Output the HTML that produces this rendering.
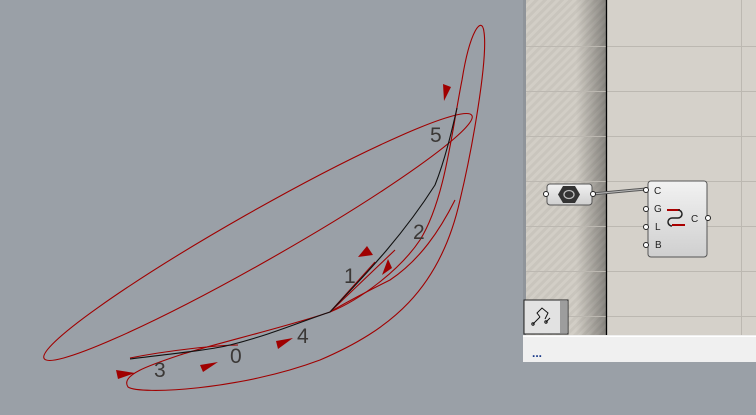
<!DOCTYPE html>
<html><head><meta charset="utf-8"><style>
html,body{margin:0;padding:0;width:756px;height:415px;overflow:hidden;background:#9aa0a7;font-family:"Liberation Sans",sans-serif}
.abs{position:absolute}
</style></head><body>
<svg class="abs" style="left:0;top:0" width="756" height="415" viewBox="0 0 756 415">
<defs>
<pattern id="hatch" width="6" height="6" patternUnits="userSpaceOnUse" patternTransform="rotate(45)">
<rect width="6" height="6" fill="#d2cec6"/><rect width="3" height="6" fill="#c9c5bd"/></pattern>
<linearGradient id="sh" x1="0" x2="1"><stop offset="0" stop-color="#000" stop-opacity="0"/><stop offset="1" stop-color="#000" stop-opacity="0.35"/></linearGradient>
<linearGradient id="comp" x1="0" y1="0" x2="0" y2="1"><stop offset="0" stop-color="#f2f2f2"/><stop offset="1" stop-color="#cfcfcf"/></linearGradient>
</defs>
<rect x="523" y="0" width="233" height="336" fill="#d5d1ca"/>
<rect x="523" y="0" width="3" height="336" fill="#8f949a"/>
<rect x="526" y="0" width="80" height="336" fill="url(#hatch)"/>
<rect x="576" y="0" width="30" height="336" fill="url(#sh)"/>
<g stroke="#bcb8b1" stroke-width="1">
<line x1="526" y1="46.5" x2="756" y2="46.5"/><line x1="526" y1="91.5" x2="756" y2="91.5"/>
<line x1="526" y1="136.5" x2="756" y2="136.5"/><line x1="526" y1="181.5" x2="756" y2="181.5"/>
<line x1="526" y1="226.5" x2="756" y2="226.5"/><line x1="526" y1="271.5" x2="756" y2="271.5"/>
<line x1="526" y1="316.5" x2="756" y2="316.5"/><line x1="741.5" y1="0" x2="741.5" y2="336"/>
</g>
<line x1="606.5" y1="0" x2="606.5" y2="336" stroke="#000" stroke-width="1.3"/>
<rect x="523" y="335" width="233" height="27" fill="#f0f0f0"/>
<line x1="523" y1="336.5" x2="756" y2="336.5" stroke="#fff"/>
<text x="532" y="357" font-size="12" fill="#1a3a8a" font-weight="bold">...</text>
<rect x="524" y="300" width="44" height="34" fill="#e2e2e2" stroke="#222"/>
<rect x="560" y="301" width="7" height="32" fill="#9d9d9d"/>
<g stroke="#111" fill="none" stroke-width="1"><path d="M533 324 L540 317 M540 317 L537 313 L542 308 L548 313 L545 319 M546 322 L550 318"/>
<circle cx="533" cy="324" r="1.2"/><circle cx="546" cy="322" r="1.2"/></g>
<path d="M592 194 L646 189" stroke="#555" stroke-width="3"/><path d="M592 194 L646 189" stroke="#bbb" stroke-width="1"/>
<rect x="547" y="184" width="45" height="21" rx="3" fill="url(#comp)" stroke="#555"/>
<polygon points="563,186 575,186 580,194.5 575,203 563,203 558,194.5" fill="#333"/>
<ellipse cx="569" cy="194.5" rx="5" ry="4" fill="none" stroke="#bbb" stroke-width="1.3"/>
<circle cx="546" cy="194" r="2.5" fill="#fff" stroke="#222"/><circle cx="593" cy="194" r="2.5" fill="#fff" stroke="#222"/>
<rect x="648" y="181" width="59" height="76" rx="3" fill="url(#comp)" stroke="#555"/>
<g fill="#fff" stroke="#222"><circle cx="646" cy="190" r="2.5"/><circle cx="646" cy="209" r="2.5"/><circle cx="646" cy="227" r="2.5"/><circle cx="646" cy="245" r="2.5"/><circle cx="708" cy="218" r="2.5"/></g>
<g font-size="10" fill="#222"><text x="654" y="194">C</text><text x="654" y="212">G</text><text x="655" y="230">L</text><text x="655" y="248">B</text><text x="691" y="222">C</text></g>
<path d="M667 210 L680 210" stroke="#a00" stroke-width="2"/><path d="M672 225 L685 225" stroke="#a00" stroke-width="2"/>
<path d="M678 210 a4 4 0 0 1 0 8 L672 218 a4 4 0 0 0 0 8" fill="none" stroke="#222" stroke-width="1.5"/>
<g fill="none" stroke="#a00000" stroke-width="1.1">
<ellipse cx="258" cy="237" rx="246" ry="25" transform="rotate(-29.6 258 237)"/>
<path d="M128,387 C140,395 240,390 320,360 C390,330 440,290 460,200 C472,150 488,60 484,32 C482,15 470,30 462,80 C452,130 445,200 420,240 C400,270 360,300 330,312 C290,326 210,345 180,355 C150,365 120,375 128,387 Z"/>
<path d="M238,345 C220,345 170,350 130,358"/>
<path d="M330,312 C350,300 370,290 390,280 C420,260 440,230 455,200"/>
<path d="M330,312 L375,262 M330,312 L395,250"/>
</g>
<g fill="none" stroke="#111" stroke-width="1.1">
<path d="M130,359 C170,354 210,350 230,345 C270,335 300,322 330,312"/>
<path d="M330,312 C360,280 400,240 435,185 C445,160 452,130 457,108"/>
</g>
<g fill="#a00000">
<polygon points="443,84 451,87 444,101"/>
<polygon points="367,246 373,255 358,257"/>
<polygon points="388,259 392,268 382,275"/>
<polygon points="116,370 135,373 118,379"/>
<polygon points="200,365 218,362 203,372"/>
<polygon points="276,341 293,338 278,349"/>
</g>
<g font-size="21" fill="#3b3836">
<text x="430" y="142">5</text><text x="413" y="239">2</text><text x="344" y="283">1</text>
<text x="297" y="343">4</text><text x="230" y="363">0</text><text x="154" y="377">3</text>
</g>
</svg>
</body></html>
